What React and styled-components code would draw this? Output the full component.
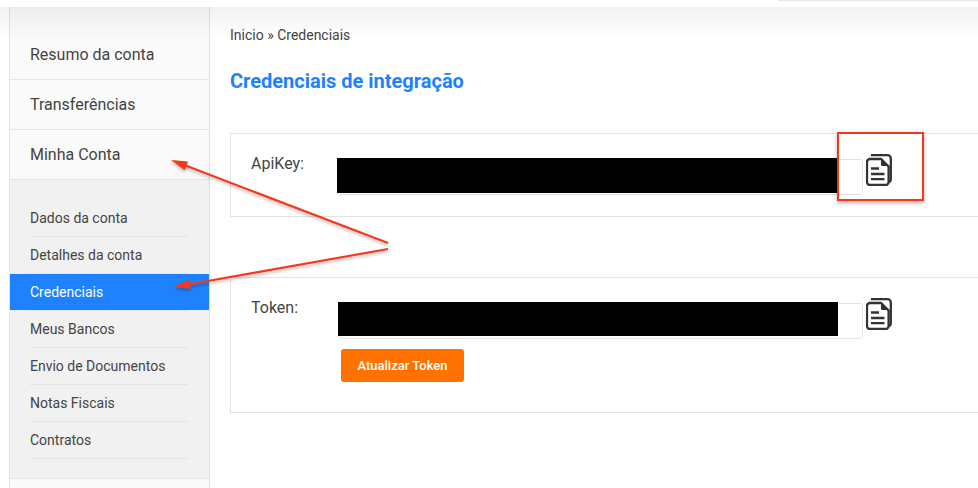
import React from "react";
import styled, { createGlobalStyle } from "styled-components";

const GlobalStyle = createGlobalStyle`
  html, body {
    margin: 0;
    padding: 0;
    height: 488px;
    overflow: hidden;
    background: #fff;
    font-family: Roboto, "Liberation Sans", sans-serif;
    color: #444;
  }
`;

const Page = styled.div`
  position: relative;
  width: 978px;
  height: 488px;
  overflow: hidden;
`;

const TopBar = styled.div`
  height: 7px;
  display: flex;
  justify-content: flex-end;
  align-items: flex-start;
`;

const TopLine = styled.div`
  width: 200px;
  height: 1px;
  background: #e6e6e6;
`;

const TopShade = styled.div`
  position: absolute;
  left: 0;
  right: 0;
  top: 7px;
  height: 32px;
  background: linear-gradient(to bottom, rgba(0, 0, 0, 0.055), rgba(0, 0, 0, 0));
  pointer-events: none;
`;

const Shell = styled.div`
  display: flex;
  padding-left: 9px;
`;

const Sidebar = styled.nav`
  width: 201px;
  flex: none;
  height: 490px;
  padding-top: 23px;
  box-sizing: border-box;
  background: #fafafa;
  border-left: 1px solid #e2e2e2;
  border-right: 1px solid #e2e2e2;
`;

const MainItem = styled.div`
  height: 50px;
  box-sizing: border-box;
  padding-left: 20px;
  display: flex;
  align-items: center;
  font-size: 16px;
  color: #444;
  border-bottom: 1px solid #e6e6e6;
`;

const SubMenu = styled.div`
  background: #f1f1f1;
  padding: 20px 0 19px;
  border-bottom: 1px solid #e6e6e6;
`;

const SubItem = styled.div`
  height: 37px;
  box-sizing: border-box;
  padding: 0 0 2px 20px;
  display: flex;
  align-items: center;
  font-size: 14px;
  color: ${(p) => (p.$active ? "#fff" : "#444")};
  background: ${(p) => (p.$active ? "linear-gradient(to bottom, #1e82ff 36px, #f1f1f1 36px)" : "transparent")};
  position: relative;
  &::after {
    content: "";
    position: absolute;
    left: 20px;
    right: 20px;
    bottom: 0;
    height: 1px;
    background: #e4e4e4;
  }
`;

const Content = styled.main`
  flex: none;
  width: 800px;
  padding: 19px 0 0 20px;
  box-sizing: border-box;
`;

const Breadcrumb = styled.div`
  font-size: 14px;
  line-height: 18px;
  color: #444;
`;

const Title = styled.h1`
  margin: 24px 0 0;
  font-size: 20px;
  line-height: 26px;
  font-weight: 700;
  color: #1e82ff;
`;

const Panel = styled.section`
  margin-top: ${(p) => p.$top}px;
  height: ${(p) => p.$height}px;
  width: 800px;
  box-sizing: border-box;
  border: 1px solid #e2e2e2;
  padding: 20px 0 0 20px;
  display: flex;
`;

const Label = styled.div`
  width: ${(p) => p.$width}px;
  flex: none;
  font-size: 16px;
  line-height: 20px;
  color: #444;
`;

const FieldColumn = styled.div`
  display: flex;
  flex-direction: column;
`;

const FieldRow = styled.div`
  display: flex;
  align-items: flex-start;
  padding-top: 5px;
`;

const Field = styled.div`
  position: relative;
  width: ${(p) => p.$width}px;
  height: 36px;
  box-sizing: border-box;
  border: 1px solid #e2e2e2;
  border-radius: 3px;
  background: #fff;
`;

const Redaction = styled.div`
  position: absolute;
  left: -1px;
  top: -2px;
  width: 500px;
  height: ${(p) => p.$height}px;
  background: #000;
`;

const CopyButton = styled.div`
  margin: -5px 0 0 3px;
  width: 26px;
  height: 32px;
  color: #333;
`;

const UpdateButton = styled.div`
  margin: 10px 0 0 3px;
  width: 123px;
  height: 33px;
  border-radius: 3px;
  background: #ff7200;
  color: #fff;
  font-size: 13px;
  font-weight: 500;
  display: flex;
  align-items: center;
  justify-content: center;
`;

const Callout = styled.div`
  position: absolute;
  left: 837px;
  top: 132px;
  width: 87px;
  height: 69px;
  box-sizing: border-box;
  border: 2px solid #f4391a;
  box-shadow: 0 2px 4px rgba(0, 0, 0, 0.3);
  pointer-events: none;
`;

const ArrowLayer = styled.svg`
  position: absolute;
  left: 0;
  top: 0;
  pointer-events: none;
`;

const CopyIcon = () => (
  <svg width="26" height="32" viewBox="0 0 26 32" fill="none" stroke="currentColor" strokeWidth="2.3">
    <path d="M5 1.2H21.5a3.3 3.3 0 0 1 3.3 3.3V25.5a3 3 0 0 1-1.8 2.7" />
    <path d="M4 5H15L22.6 12.4V28a3 3 0 0 1-3 3H4a3 3 0 0 1-3-3V8a3 3 0 0 1 3-3Z" fill="#fff" />
    <path d="M15 5.5L22 12H16.5a1.5 1.5 0 0 1-1.5-1.5Z" fill="currentColor" stroke="none" />
    <path d="M5 14.5H13M5 20H18.5M5 25.2H18.5" />
  </svg>
);

const Arrow = ({ x1, y1, x2, y2 }) => {
  const angle = Math.atan2(y1 - y2, x1 - x2);
  const len = 17;
  const spread = 0.28;
  const ax = x2 + len * Math.cos(angle + spread);
  const ay = y2 + len * Math.sin(angle + spread);
  const bx = x2 + len * Math.cos(angle - spread);
  const by = y2 + len * Math.sin(angle - spread);
  return (
    <g filter="url(#arrowShadow)">
      <line x1={x1} y1={y1} x2={x2 + 10 * Math.cos(angle)} y2={y2 + 10 * Math.sin(angle)} stroke="#f4391a" strokeWidth="2.2" />
      <polygon points={`${x2},${y2} ${ax},${ay} ${bx},${by}`} fill="#f4391a" />
    </g>
  );
};

const mainItems = ["Resumo da conta", "Transferências", "Minha Conta"];
const subItems = [
  "Dados da conta",
  "Detalhes da conta",
  "Credenciais",
  "Meus Bancos",
  "Envio de Documentos",
  "Notas Fiscais",
  "Contratos",
];

export default function App() {
  return (
    <Page>
      <GlobalStyle />
      <TopBar>
        <TopLine />
      </TopBar>
      <Shell>
        <Sidebar>
          {mainItems.map((item) => (
            <MainItem key={item}>{item}</MainItem>
          ))}
          <SubMenu>
            {subItems.map((item) => (
              <SubItem key={item} $active={item === "Credenciais"}>
                {item}
              </SubItem>
            ))}
          </SubMenu>
        </Sidebar>
        <Content>
          <Breadcrumb>Inicio » Credenciais</Breadcrumb>
          <Title>Credenciais de integração</Title>
          <Panel $top={39} $height={84}>
            <Label $width={86}>ApiKey:</Label>
            <FieldRow>
              <Field $width={526}>
                <Redaction $height={35} />
              </Field>
              <CopyButton>
                <CopyIcon />
              </CopyButton>
            </FieldRow>
          </Panel>
          <Panel $top={60} $height={136}>
            <Label $width={87}>Token:</Label>
            <FieldColumn>
              <FieldRow>
                <Field $width={525}>
                  <Redaction $height={34} />
                </Field>
                <CopyButton>
                  <CopyIcon />
                </CopyButton>
              </FieldRow>
              <UpdateButton>Atualizar Token</UpdateButton>
            </FieldColumn>
          </Panel>
        </Content>
      </Shell>
      <TopShade />
      <Callout />
      <ArrowLayer width="978" height="488">
        <defs>
          <filter id="arrowShadow" x="-10%" y="-30%" width="120%" height="170%">
            <feDropShadow dx="0" dy="2" stdDeviation="1.5" floodColor="#000" floodOpacity="0.28" />
          </filter>
        </defs>
        <Arrow x1={388} y1={243} x2={171} y2={160} />
        <Arrow x1={388} y1={249} x2={174} y2={287} />
      </ArrowLayer>
    </Page>
  );
}
